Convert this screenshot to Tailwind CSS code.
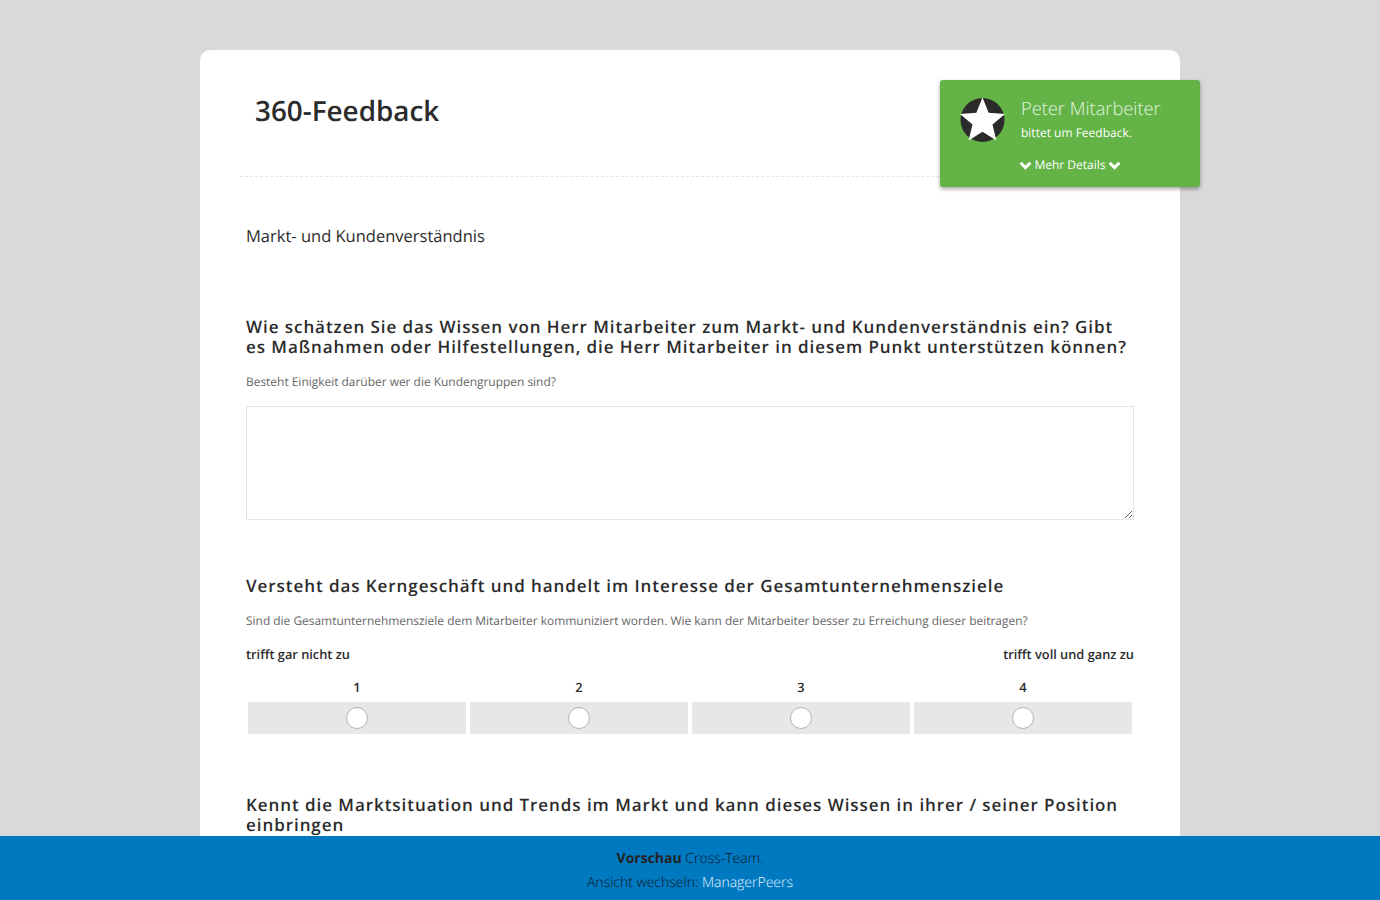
<!DOCTYPE html>
<html lang="de">
<head>
  <meta charset="UTF-8" />
  <title>360-Feedback</title>
  <script src="https://cdn.jsdelivr.net/npm/@tailwindcss/browser@4"></script>
</head>
<body class="bg-[#d9d9d9] text-[#2b2b2b] font-['Open_Sans',sans-serif] [text-rendering:geometricPrecision] h-[900px] overflow-hidden">

  <!-- Card -->
  <main class="relative w-[980px] mx-auto mt-[50px] bg-white rounded-[10px] px-[40px] pb-20">
    <header class="h-[127px] border-b border-dashed border-[#e5e5e5]">
      <h1 class="pl-[15px] pt-[41px] text-[27.850px] leading-[40px] font-semibold">360-Feedback</h1>
    </header>

    <!-- Requester badge -->
    <aside class="absolute left-[740px] top-[30px] w-[260px] h-[107px] bg-[#63b346] rounded-[3px] shadow-[0_2px_4px_rgba(0,0,0,0.35)] text-white">
      <div class="flex pl-[20px] pt-[17px]">
        <svg viewBox="0 0 46 46" class="w-[45px] h-[46px] shrink-0">
          <circle cx="23" cy="23" r="22.5" fill="#2b2b2b" />
          <path d="M23 0 L29.3 15.6 L46 16.8 L33.2 27.6 L37.2 44 L23 35.1 L8.800 44 L12.800 27.600 L0 16.8 L16.700 15.6 Z" fill="#fff" />
        </svg>
        <div class="ml-[16px]">
          <p class="text-[18.250px] leading-[24px] font-light text-[#e6f3e0]">Peter Mitarbeiter</p>
          <p class="text-[12px] leading-[16px] mt-[4px]">bittet um Feedback.</p>
        </div>
      </div>
      <div class="flex items-center justify-center gap-[2px] mt-[14px] text-[12px] leading-[16px]">
        <svg viewBox="0 0 12 8" class="w-[13px] h-[9px]"><path d="M1.500 1.500 L6 6 L10.500 1.500" fill="none" stroke="#fff" stroke-width="2.800" /></svg>
        <span>Mehr Details</span>
        <svg viewBox="0 0 12 8" class="w-[13px] h-[9px]"><path d="M1.500 1.500 L6 6 L10.500 1.500" fill="none" stroke="#fff" stroke-width="2.800" /></svg>
      </div>
    </aside>

    <div class="px-[6px]">
      <h2 class="mt-[47px] text-[16.500px] leading-[24px]">Markt- und Kundenverständnis</h2>

      <!-- Question 1 -->
      <section class="mt-[69px]">
        <h3 class="text-[17px] leading-[20px] font-semibold tracking-[0.940px] text-[#2b2b2b]">Wie schätzen Sie das Wissen von Herr Mitarbeiter zum Markt- und Kundenverständnis ein? Gibt es Maßnahmen oder Hilfestellungen, die Herr Mitarbeiter in diesem Punkt unterstützen können?</h3>
        <p class="mt-[15px] text-[11.950px] leading-[20px] text-[#666]">Besteht Einigkeit darüber wer die Kundengruppen sind?</p>
        <textarea class="block w-full h-[114px] mt-[14px] border border-[#e5e5e5] bg-white resize-y outline-none"></textarea>
      </section>

      <!-- Question 2 -->
      <section class="mt-[56px]">
        <h3 class="text-[17px] leading-[20px] font-semibold tracking-[0.940px] text-[#2b2b2b]">Versteht das Kerngeschäft und handelt im Interesse der Gesamtunternehmensziele</h3>
        <p class="mt-[15px] text-[11.950px] leading-[20px] text-[#666]">Sind die Gesamtunternehmensziele dem Mitarbeiter kommuniziert worden. Wie kann der Mitarbeiter besser zu Erreichung dieser beitragen?</p>
        <div class="flex justify-between mt-[13px] text-[12.800px] leading-[20px] font-semibold">
          <span>trifft gar nicht zu</span>
          <span>trifft voll und ganz zu</span>
        </div>
        <div class="grid grid-cols-4 gap-[4px] px-[2px] mt-[13px] text-[12.800px] leading-[20px] font-semibold text-center">
          <div>1<div class="flex items-center justify-center h-[32px] mt-[5px] bg-[#e7e7e7]"><span class="w-[22px] h-[22px] rounded-full bg-white border border-[#b5b5b5]"></span></div></div>
          <div>2<div class="flex items-center justify-center h-[32px] mt-[5px] bg-[#e7e7e7]"><span class="w-[22px] h-[22px] rounded-full bg-white border border-[#b5b5b5]"></span></div></div>
          <div>3<div class="flex items-center justify-center h-[32px] mt-[5px] bg-[#e7e7e7]"><span class="w-[22px] h-[22px] rounded-full bg-white border border-[#b5b5b5]"></span></div></div>
          <div>4<div class="flex items-center justify-center h-[32px] mt-[5px] bg-[#e7e7e7]"><span class="w-[22px] h-[22px] rounded-full bg-white border border-[#b5b5b5]"></span></div></div>
        </div>
      </section>

      <!-- Question 3 -->
      <section class="mt-[61px]">
        <h3 class="text-[17px] leading-[20px] font-semibold tracking-[0.940px] text-[#2b2b2b]">Kennt die Marktsituation und Trends im Markt und kann dieses Wissen in ihrer / seiner Position einbringen</h3>
      </section>
    </div>
  </main>

  <!-- Preview bar -->
  <footer class="fixed left-0 right-0 bottom-0 h-[64px] bg-[#0079c1] text-center text-[14px] leading-[24px] font-light pt-[11px] text-[#0a1622]">
    <p><strong class="font-bold text-[#222]">Vorschau</strong> Cross-Team.</p>
    <p>Ansicht wechseln: <a href="#" class="text-[#e4f3fd]">ManagerPeers</a></p>
  </footer>
</body>
</html>
